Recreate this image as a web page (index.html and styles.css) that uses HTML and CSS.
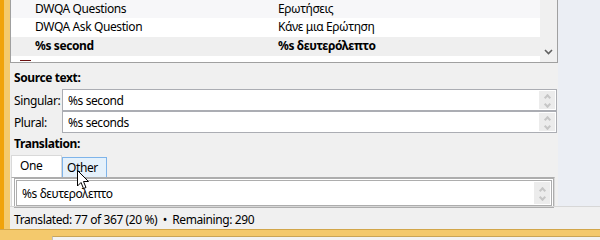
FILE: index.html
```html
<html>
<head>
     <title>Translation editor</title>
     <link rel="stylesheet" href="styles.css">
</head>
<body>
     <div class="shell">
          <div class="edge-outer"></div>
          <div class="edge-inner"></div>
          <div class="content">
               <div class="top">
                    <div class="editor">
                         <div class="list">
                              <div class="rows">
                                   <div class="row alt"><span class="src">DWQA Questions</span><span class="dst">Ερωτήσεις</span></div>
                                   <div class="row"><span class="src">DWQA Ask Question</span><span class="dst">Κάνε μια Ερώτηση</span></div>
                                   <div class="row current"><span class="src">%s second</span><span class="dst">%s δευτερόλεπτο</span></div>
                                   <div class="row"><span class="mark"></span></div>
                              </div>
                              <div class="scroll">
                                   <svg width="9" height="6" viewBox="0 0 9 6"><path d="M1 1 L4.5 4.5 L8 1" fill="none" stroke="#606060" stroke-width="1.6"/></svg>
                              </div>
                         </div>

                         <div class="form">
                              <div class="heading">Source text:</div>
                              <div class="field-row">
                                   <label>Singular:</label>
                                   <div class="field"><span>%s second</span><div class="spin"><span class="up"></span><span class="down"></span></div></div>
                              </div>
                              <div class="field-row">
                                   <label>Plural:</label>
                                   <div class="field"><span>%s seconds</span><div class="spin"><span class="up"></span><span class="down"></span></div></div>
                              </div>
                              <div class="heading second">Translation:</div>
                              <div class="tabs">
                                   <div class="tab active">One</div>
                                   <div class="tab hover">Other</div>
                              </div>
                              <div class="pane">
                                   <div class="field trans"><span>%s δευτερολεπτο</span><div class="spin"><span class="up"></span><span class="down"></span></div></div>
                              </div>
                         </div>
                    </div>
                    <div class="side"></div>
               </div>
               <div class="status">Translated: 77 of 367 (20 %) &nbsp;•&nbsp; Remaining: 290</div>
          </div>
     </div>
     <div class="bottom">
          <div class="bottom-left"></div>
          <div class="bottom-right"></div>
     </div>

     <svg class="cursor" width="13" height="20" viewBox="0 0 13 20">
          <path d="M0.5 0.5 L0.5 16 L4 12.5 L6.5 18.5 L9 17.5 L6.5 11.5 L11.5 11.5 Z" fill="#fff" stroke="#000" stroke-width="1"/>
     </svg>
</body>
</html>
```

FILE: styles.css
```css
body {
     margin: 0;
     width: 600px;
     height: 240px;
     overflow: hidden;
     font-family: "Noto Sans", sans-serif;
     font-size: 12px;
     letter-spacing: -0.4px;
     color: #000;
     background-color: #f4c96c;
     position: relative;
}

.shell {
     display: flex;
     height: 229px;
}

.edge-outer {
     width: 4px;
     background-color: #f0a30a;
}

.edge-inner {
     width: 6px;
     background-color: #f4ca6c;
}

.content {
     flex: 1;
     display: flex;
     flex-direction: column;
     background-color: #f0f0f0;
}

.top {
     display: flex;
     height: 206px;
}

.editor {
     width: 548px;
     display: flex;
     flex-direction: column;
}

.side {
     flex: 1;
     background-color: #ebeef4;
}

/* string list */
.list {
     height: 62px;
     display: flex;
     background-color: #fff;
     border: 1px solid #a0a0a0;
     border-top: none;
     overflow: hidden;
}

.rows {
     flex: 1;
}

.row {
     height: 19px;
     line-height: 18px;
     display: flex;
     white-space: nowrap;
}

.row.alt {
     height: 18px;
     background-color: #f7f7f9;
}

.row.current {
     background-color: #efefef;
     font-weight: bold;
}

.src {
     width: 243px;
     padding-left: 24px;
}

.mark {
     display: block;
     width: 11px;
     height: 1px;
     margin: 4px 0 0 9px;
     background-color: #6b1010;
}

.scroll {
     width: 17px;
     background-color: #f0f0f0;
     display: flex;
     align-items: flex-end;
     justify-content: center;
     padding-bottom: 7px;
     box-sizing: border-box;
}

/* source / translation form */
.form {
     padding: 0 1px 0 4px;
}

.heading {
     font-weight: bold;
     line-height: 16px;
     margin-top: 7px;
}

.heading.second {
     margin-top: 3px;
}

.field-row {
     display: flex;
     align-items: center;
}

.field-row label {
     width: 48px;
}

.field {
     flex: 1;
     height: 22px;
     box-sizing: border-box;
     border: 1px solid #abadb3;
     background-color: #fff;
     display: flex;
     align-items: center;
     justify-content: space-between;
     padding-left: 5px;
}

.heading + .field-row {
     margin-top: 3px;
}

.spin {
     width: 16px;
     height: 18px;
     margin-right: 1px;
     background-color: #ececec;
     display: flex;
     flex-direction: column;
     align-items: center;
     justify-content: center;
     gap: 2px;
}

.spin span {
     width: 5px;
     height: 5px;
     border-left: 2px solid #c6c6c6;
     border-top: 2px solid #c6c6c6;
     box-sizing: border-box;
}

.spin .up {
     transform: rotate(45deg);
     margin-top: 2px;
}

.spin .down {
     transform: rotate(225deg);
}

/* plural tabs */
.tabs {
     display: flex;
     align-items: flex-end;
     margin: 3px 0 0 -3px;
     height: 22px;
}

.tab {
     box-sizing: border-box;
     padding: 0 8px;
}

.tab.active {
     height: 22px;
     line-height: 20px;
     width: 51px;
     background-color: #fff;
     border: 1px solid #d9d9d9;
     border-bottom: none;
     position: relative;
     z-index: 1;
}

.tab.hover {
     height: 20px;
     line-height: 20px;
     width: 45px;
     padding: 0 4px;
     background-color: #e5f1fb;
     border: 1px solid #7eb4ea;
     border-bottom: none;
}

.pane {
     margin-left: -3px;
     margin-right: 2px;
     height: 29px;
     box-sizing: border-box;
     background-color: #fff;
     border: 1px solid #d9d9d9;
     border-top: 1px solid #adadad;
     border-bottom: none;
     padding: 1px 1px 0 3px;
}

.field.trans {
     height: 26px;
     border: 1px solid #adadad;
     box-shadow: 0 0 0 1px #fff, 0 0 0 2px #adadad;
     margin: 1px 1px 0 1px;
}

.field.trans .spin {
     height: 22px;
}

/* status bar */
.status {
     flex: 1;
     border-top: 1px solid #d7d7d7;
     line-height: 20px;
     padding: 3px 0 0 4px;
}

.bottom {
     height: 11px;
     border-top: 1px solid #d2a64a;
     box-sizing: border-box;
     display: flex;
     align-items: flex-end;
}

.bottom-left {
     width: 52px;
}

.bottom-right {
     flex: 1;
     height: 3px;
     border-top: 1px solid #c9a558;
     border-left: 1px solid #c0c0c0;
     background-color: #f3f3f3;
}

.cursor {
     position: absolute;
     left: 77px;
     top: 170px;
}
```
